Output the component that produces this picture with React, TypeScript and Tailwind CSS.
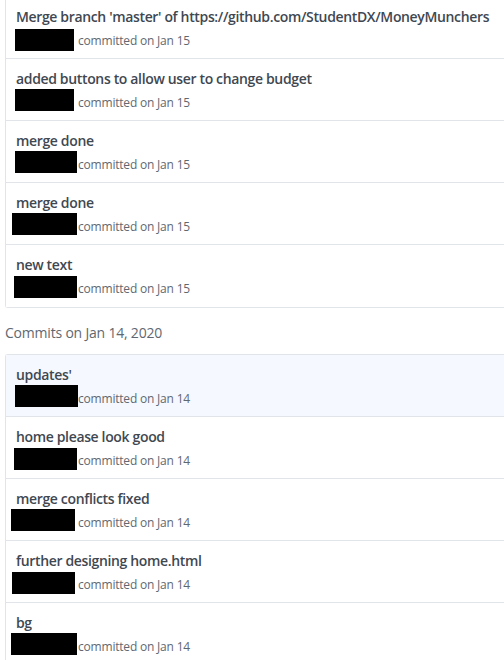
import React from "react";

type Commit = {
  title: string;
  date: string;
  box: [number, number, number]; // left, width, top (within row)
  active?: boolean;
};

const jan15: Commit[] = [
  { title: "Merge branch 'master' of https://github.com/StudentDX/MoneyMunchers", date: "Jan 15", box: [15, 59, 34] },
  { title: "added buttons to allow user to change budget", date: "Jan 15", box: [15, 59, 32] },
  { title: "merge done", date: "Jan 15", box: [15, 62, 32] },
  { title: "merge done", date: "Jan 15", box: [12, 65, 32] },
  { title: "new text", date: "Jan 15", box: [14, 63, 33] },
];

const jan14: Commit[] = [
  { title: "updates'", date: "Jan 14", box: [15, 63, 32], active: true },
  { title: "home please look good", date: "Jan 14", box: [14, 63, 33] },
  { title: "merge conflicts fixed", date: "Jan 14", box: [11, 64, 32] },
  { title: "further designing home.html", date: "Jan 14", box: [12, 63, 33] },
  { title: "bg", date: "Jan 14", box: [11, 66, 32] },
];

const Row = ({ c }: { c: Commit }) => (
  <li
    className={`relative h-[62px] border-b border-[#e1e4e8] last:border-b-0 pl-[10px] pt-[10px] ${
      c.active ? "bg-[#f5f9ff]" : "bg-white"
    }`}
  >
    <p className="text-[14px] leading-[20px] font-semibold tracking-[-0.35px] text-[#3f4851] whitespace-nowrap">
      {c.title}
    </p>
    <div className="mt-[3px] h-[22px] flex items-center pl-[62px] text-[12px] tracking-[-0.2px] text-[#5f6870]">
      committed on {c.date}
    </div>
    <span
      className="absolute bg-black h-[22px]"
      style={{ left: c.box[0] - 6, width: c.box[1], top: c.box[2] - 2 }}
    />
  </li>
);

const App = () => {
  return (
    <div
      className="w-[504px] h-[660px] overflow-hidden bg-white pl-[5px]"
      style={{ fontFamily: '"Open Sans", "Noto Sans", sans-serif' }}
    >
      <ul className="-mt-[4px] border border-r-0 border-[#e1e4e8] rounded-l-[3px]">
        {jan15.map((c, i) => (
          <Row key={i} c={c} />
        ))}
      </ul>
      <h3 className="h-[46px] pt-[15px] leading-[20px] text-[14px] tracking-[-0.2px] text-[#5f6870]">
        Commits on Jan 14, 2020
      </h3>
      <ul className="border border-r-0 border-[#e1e4e8] rounded-l-[3px]">
        {jan14.map((c, i) => (
          <Row key={i} c={c} />
        ))}
      </ul>
    </div>
  );
};

export default App;
